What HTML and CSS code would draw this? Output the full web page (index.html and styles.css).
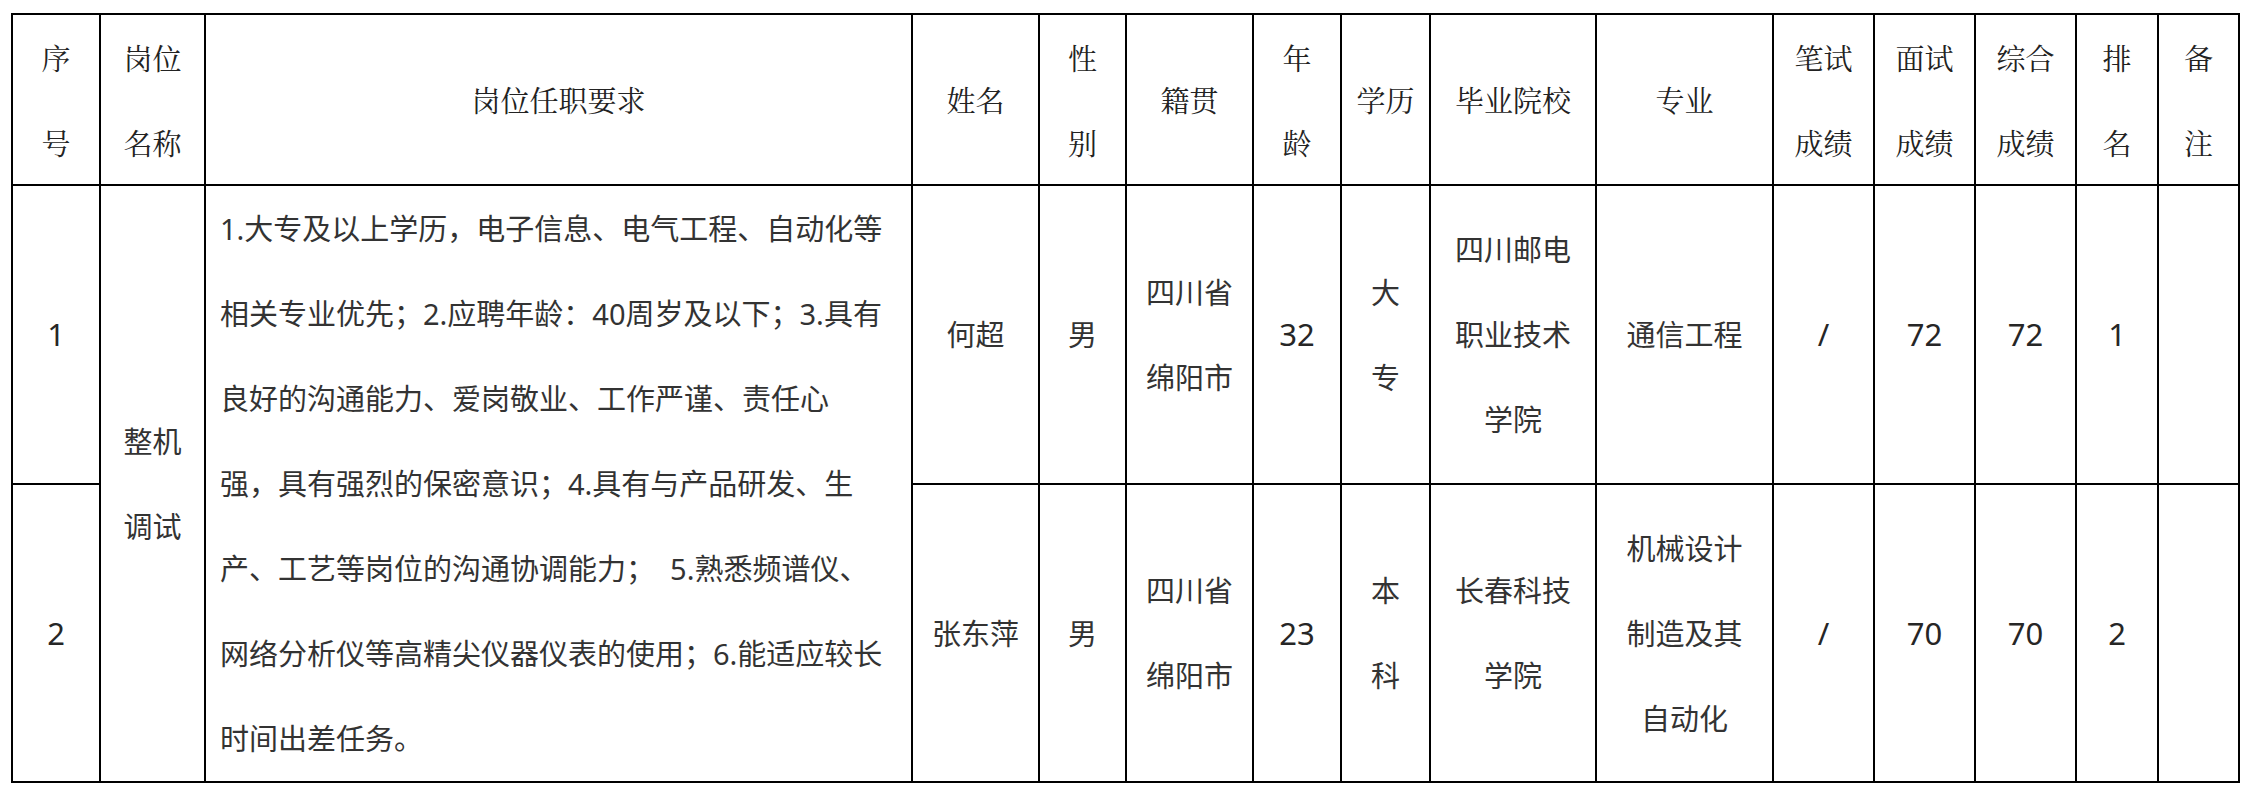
FILE: index.html
```html
<!DOCTYPE html>
<html lang="zh-CN">
<head>
<meta charset="utf-8">
<title>岗位任职要求</title>
<link rel="stylesheet" href="styles.css">
</head>
<body>
<div class="sheet">
  <div class="cell head">序<br>号</div>
  <div class="cell head">岗位<br>名称</div>
  <div class="cell head">岗位任职要求</div>
  <div class="cell head">姓名</div>
  <div class="cell head">性<br>别</div>
  <div class="cell head">籍贯</div>
  <div class="cell head">年<br>龄</div>
  <div class="cell head">学历</div>
  <div class="cell head">毕业院校</div>
  <div class="cell head">专业</div>
  <div class="cell head">笔试<br>成绩</div>
  <div class="cell head">面试<br>成绩</div>
  <div class="cell head">综合<br>成绩</div>
  <div class="cell head">排<br>名</div>
  <div class="cell head">备<br>注</div>

  <div class="cell num">1</div>
  <div class="cell span2">整机<br>调试</div>
  <div class="cell span2 req">1.大专及以上学历，电子信息、电气工程、自动化等<br>相关专业优先；2.应聘年龄：40周岁及以下；3.具有<br>良好的沟通能力、爱岗敬业、工作严谨、责任心<br>强，具有强烈的保密意识；4.具有与产品研发、生<br>产、工艺等岗位的沟通协调能力；&nbsp;&nbsp;5.熟悉频谱仪、<br>网络分析仪等高精尖仪器仪表的使用；6.能适应较长<br>时间出差任务。</div>
  <div class="cell">何超</div>
  <div class="cell">男</div>
  <div class="cell">四川省<br>绵阳市</div>
  <div class="cell num">32</div>
  <div class="cell">大<br>专</div>
  <div class="cell">四川邮电<br>职业技术<br>学院</div>
  <div class="cell">通信工程</div>
  <div class="cell num">/</div>
  <div class="cell num">72</div>
  <div class="cell num">72</div>
  <div class="cell num">1</div>
  <div class="cell"></div>

  <div class="cell num">2</div>
  <div class="cell">张东萍</div>
  <div class="cell">男</div>
  <div class="cell">四川省<br>绵阳市</div>
  <div class="cell num">23</div>
  <div class="cell">本<br>科</div>
  <div class="cell">长春科技<br>学院</div>
  <div class="cell">机械设计<br>制造及其<br>自动化</div>
  <div class="cell num">/</div>
  <div class="cell num">70</div>
  <div class="cell num">70</div>
  <div class="cell num">2</div>
  <div class="cell"></div>
</div>
</body>
</html>
```

FILE: styles.css
```css
html, body {
  margin: 0;
  padding: 0;
  background: #ffffff;
}

.sheet {
  display: grid;
  grid-template-columns: 88px 105px 707px 127px 87px 127px 88px 89px 166px 177px 101px 101px 101px 82px 81px;
  grid-template-rows: 171px 299px 298px;
  width: max-content;
  margin: 13px 0 0 11px;
  border-left: 2px solid #000;
  border-top: 2px solid #000;
}

.cell {
  box-sizing: border-box;
  border-right: 2px solid #000;
  border-bottom: 2px solid #000;
  display: flex;
  flex-direction: column;
  justify-content: center;
  align-items: center;
  text-align: center;
  font-family: "Noto Sans", "Noto Sans CJK SC", sans-serif;
  font-size: 29px;
  line-height: 85px;
  color: #333333;
  white-space: nowrap;
}

.head {
  font-family: "Noto Serif CJK SC", "Noto Sans CJK SC", sans-serif;
  color: #222222;
}

.num {
  font-family: "Noto Sans", "Open Sans", sans-serif;
  font-size: 31px;
  color: #262626;
}

.span2 {
  grid-row: span 2;
}

.req {
  display: block;
  text-align: left;
  padding: 0 14px;
}
```
